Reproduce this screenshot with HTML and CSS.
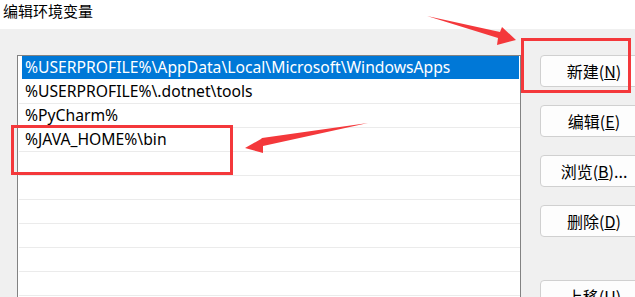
FILE: index.html
```html
<!DOCTYPE html>
<html>
  <head>
    <meta charset="utf-8">
    <title>编辑环境变量</title>
    <link rel="stylesheet" href="styles.css">
  </head>
  <body>
    <div class="titlebar">编辑环境变量</div>

    <div class="dialog">
      <div class="pathList">
        <div class="row selected">%USERPROFILE%\AppData\Local\Microsoft\WindowsApps</div>
        <div class="row">%USERPROFILE%\.dotnet\tools</div>
        <div class="row">%PyCharm%</div>
        <div class="row">%JAVA_HOME%\bin</div>
        <div class="row"></div>
        <div class="row"></div>
        <div class="row"></div>
        <div class="row"></div>
        <div class="row"></div>
        <div class="row"></div>
      </div>

      <div class="buttons">
        <button class="btn">新建(<u>N</u>)</button>
        <button class="btn">编辑(<u>E</u>)</button>
        <button class="btn">浏览(<u>B</u>)...</button>
        <button class="btn">删除(<u>D</u>)</button>
        <button class="btn moveUp">上移(<u>U</u>)</button>
      </div>
    </div>

    <!-- red annotations drawn over the dialog -->
    <svg class="marks" width="635" height="297" viewBox="0 0 635 297">
      <rect x="522.5" y="39.5" width="107" height="52" fill="none" stroke="#f4383b" stroke-width="3"/>
      <rect x="12.5" y="126.5" width="219" height="47" fill="none" stroke="#f4383b" stroke-width="3"/>
      <polygon points="427,16 500,32 502,27 516,40 497,45 498,38" fill="#f4383b"/>
      <polygon points="368,123 262,138 261,139 245,148 263,153 263,146" fill="#f4383b"/>
    </svg>
  </body>
</html>
```

FILE: styles.css
```css
html {
  font-family: "Noto Sans", "Noto Sans CJK SC", sans-serif;
}

body {
  margin: 0;
  width: 635px;
  height: 297px;
  overflow: hidden;
  background-color: white;
  position: relative;
}

.titlebar {
  height: 29px;
  padding-left: 3px;
  font-family: "Noto Sans CJK SC", sans-serif;
  font-size: 15px;
  line-height: 22px;
  color: black;
}

.dialog {
  display: flex;
  align-items: flex-start;
  height: 268px;
  overflow: hidden;
  padding: 26px 0 0 17px;
  box-sizing: border-box;
  background-color: rgb(240, 240, 240);
}

.pathList {
  flex-shrink: 0;
  width: 501px;
  height: 260px;
  padding-left: 1px;
  background-color: white;
  border: 1px solid rgb(130, 130, 130);
  border-bottom: none;
}

.row {
  height: 23px;
  border-bottom: 1px solid rgb(235, 235, 235);
  padding-left: 6px;
  font-size: 15.7px;
  line-height: 23px;
  color: black;
  white-space: nowrap;
}

.selected {
  margin-left: 3px;
  margin-right: 1px;
  padding-left: 3px;
  background-color: rgb(0, 120, 215);
  color: white;
  border-bottom-color: white;
}

.buttons {
  flex-shrink: 0;
  display: flex;
  flex-direction: column;
  gap: 18px;
  margin-left: 19px;
}

.btn {
  width: 108px;
  height: 32px;
  padding: 0;
  background-color: rgb(253, 253, 253);
  border: 1px solid rgb(208, 208, 208);
  border-radius: 4px;
  font-family: "Noto Sans CJK SC", sans-serif;
  font-size: 16px;
  color: black;
}

.moveUp {
  margin-top: 25px;
}

.marks {
  position: absolute;
  left: 0;
  top: 0;
}
```
